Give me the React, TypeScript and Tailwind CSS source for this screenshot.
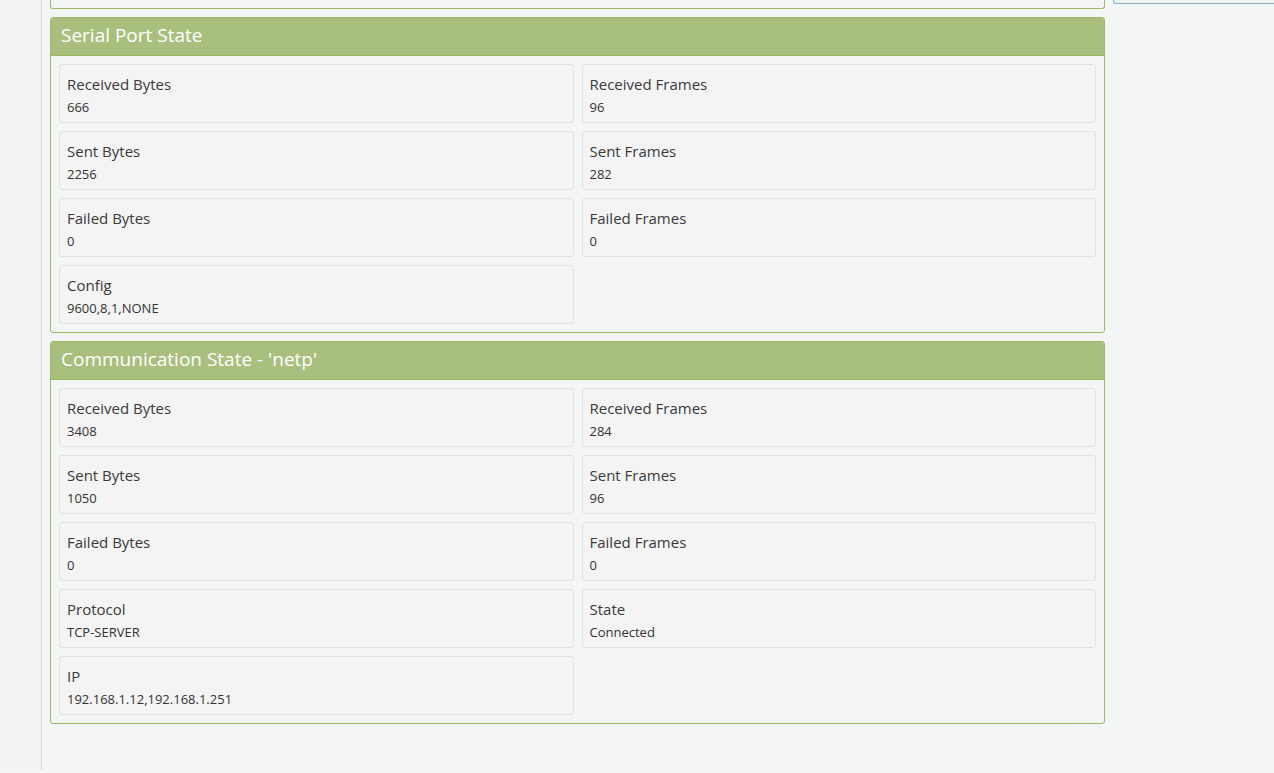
import React from "react";

type Item = { label: string; value: string };

const serial: Item[] = [
  { label: "Received Bytes", value: "666" },
  { label: "Received Frames", value: "96" },
  { label: "Sent Bytes", value: "2256" },
  { label: "Sent Frames", value: "282" },
  { label: "Failed Bytes", value: "0" },
  { label: "Failed Frames", value: "0" },
  { label: "Config", value: "9600,8,1,NONE" },
];

const comm: Item[] = [
  { label: "Received Bytes", value: "3408" },
  { label: "Received Frames", value: "284" },
  { label: "Sent Bytes", value: "1050" },
  { label: "Sent Frames", value: "96" },
  { label: "Failed Bytes", value: "0" },
  { label: "Failed Frames", value: "0" },
  { label: "Protocol", value: "TCP-SERVER" },
  { label: "State", value: "Connected" },
  { label: "IP", value: "192.168.1.12,192.168.1.251" },
];

function Panel({ title, items }: { title: string; items: Item[] }) {
  return (
    <div className="rounded-[3px] border border-[#9dba62] bg-[#f4f5f5] overflow-hidden">
      <div className="h-[38px] bg-[#a9bf7e] border-b border-[#9dba62] px-[10px] flex items-center pb-[3px]">
        <span className="text-white text-[19px] leading-none">{title}</span>
      </div>
      <div className="grid grid-cols-2 gap-x-[8px] gap-y-[8px] p-[8px]">
        {items.map((it) => (
          <div
            key={it.label}
            className="h-[59px] rounded-[3px] border border-[#e2e2e2] bg-[#f4f4f4] px-[7px] pt-[9px]"
          >
            <div className="text-[15px] leading-[20px] text-[#3a3a3a]">{it.label}</div>
            <div className="text-[13px] leading-[18px] mt-[4px] text-[#333]">{it.value}</div>
          </div>
        ))}
      </div>
    </div>
  );
}

export default function App() {
  return (
    <div
      className="flex h-[773px] w-[1274px] overflow-hidden bg-[#f4f5f5]"
      style={{ fontFamily: '"Open Sans", "Noto Sans", sans-serif' }}
    >
      {/* sidebar strip */}
      <div className="w-[42px] h-[770px] shrink-0 bg-[#f3f3f3] border-r border-[#d4d4d4]" />

      {/* main column */}
      <div className="w-[1055px] ml-[8px] shrink-0 flex flex-col gap-[8px]">
        <div className="h-[9px] rounded-b-[3px] border border-t-0 border-[#9dba62]" />
        <Panel title="Serial Port State" items={serial} />
        <Panel title="Communication State - 'netp'" items={comm} />
      </div>

      {/* right column */}
      <div className="flex-1 ml-[8px]">
        <div className="h-[4px] rounded-bl-[3px] border-l border-b border-[#7fb3d1]" />
      </div>
    </div>
  );
}
